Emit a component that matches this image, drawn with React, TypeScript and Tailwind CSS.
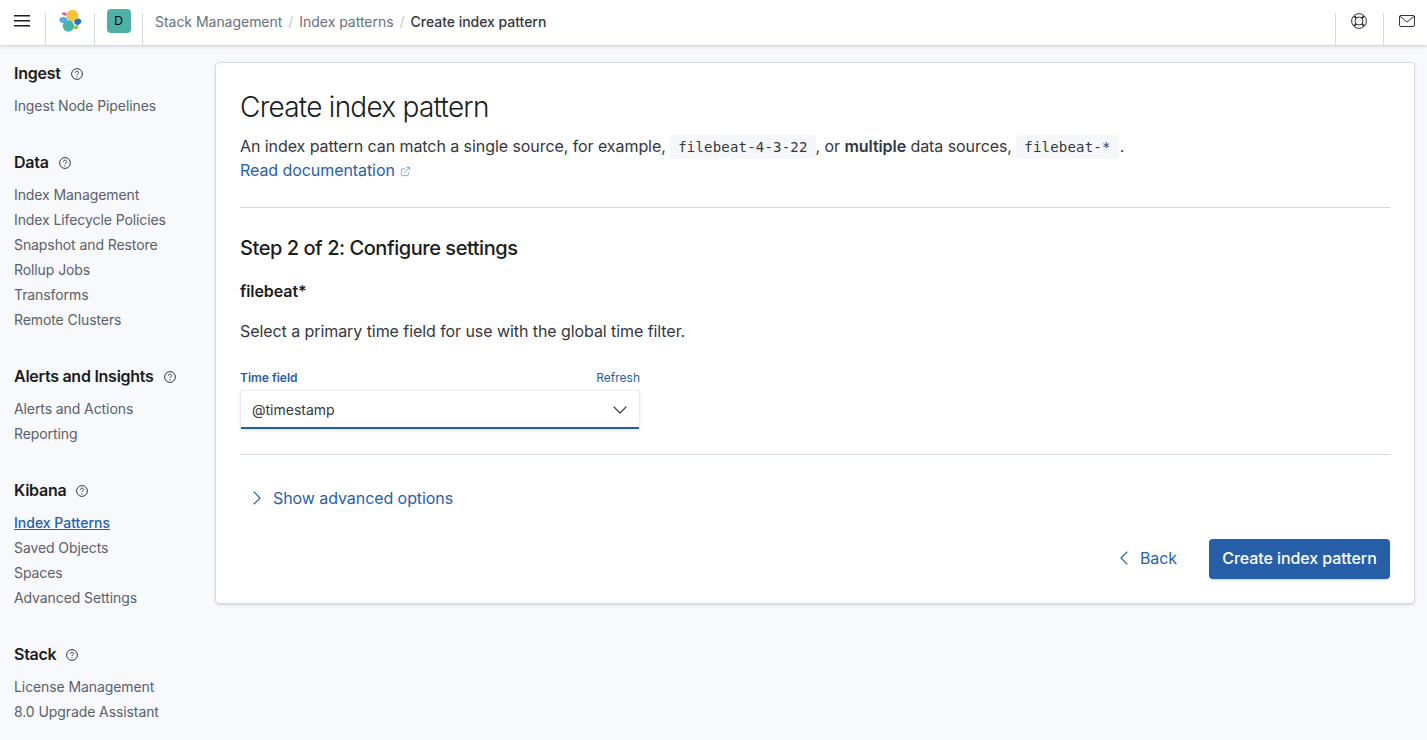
import React from "react";
import { ChevronDown, ChevronLeft, ChevronRight, ExternalLink } from "lucide-react";

const sections = [
    { title: "Ingest", items: ["Ingest Node Pipelines"] },
    {
        title: "Data",
        items: ["Index Management", "Index Lifecycle Policies", "Snapshot and Restore", "Rollup Jobs", "Transforms", "Remote Clusters"],
    },
    { title: "Alerts and Insights", items: ["Alerts and Actions", "Reporting"] },
    { title: "Kibana", items: ["Index Patterns", "Saved Objects", "Spaces", "Advanced Settings"] },
    { title: "Stack", items: ["License Management", "8.0 Upgrade Assistant"] },
];

function HelpIcon() {
    return (
        <svg width="12" height="12" viewBox="0 0 12 12" fill="none" stroke="#343741" className="mt-[1px] shrink-0">
            <circle cx="6" cy="6" r="5.4" strokeWidth="1" />
            <path d="M4.4 4.8c0-1 .7-1.6 1.6-1.6s1.6.6 1.6 1.4c0 1.1-1.6 1.2-1.6 2.4" strokeWidth="1" />
            <circle cx="6" cy="8.7" r=".6" fill="#343741" stroke="none" />
        </svg>
    );
}

function Logo() {
    return (
        <svg width="24" height="24" viewBox="0 0 24 24">
            <ellipse cx="5.4" cy="11" rx="4" ry="3" fill="#5aa8e8" />
            <path d="M4.2 3.4h2.4a2.4 2.4 0 0 1 2.2 3.2H6.4a2.4 2.4 0 0 1-2.2-3.2z" fill="#e0559a" />
            <circle cx="14.5" cy="6.7" r="6" fill="#f6c33c" />
            <circle cx="10.4" cy="17" r="5.7" fill="#4ab3a8" />
            <ellipse cx="19.8" cy="12.7" rx="3.6" ry="3" transform="rotate(-25 19.8 12.7)" fill="#2b6fc0" />
            <path d="M16.5 16.4h4a3.6 3.6 0 0 1-3.6 3.6h-1.4z" fill="#93c040" />
        </svg>
    );
}

function Code({ children }: { children: React.ReactNode }) {
    return (
        <code className="inline-block h-[24px] rounded-[3px] bg-[#f5f7fa] px-[8px] align-baseline font-['DejaVu_Sans_Mono',monospace] text-[14px] leading-[24px] tracking-[0.2px] text-[#343741]">
            {children}
        </code>
    );
}

export default function App() {
    return (
        <div className="flex h-[740px] flex-col overflow-hidden bg-[#f8f9fd] font-['Inter',sans-serif] text-[#343741]">
            <header className="relative z-10 flex h-[45px] shrink-0 items-start bg-white shadow-[0_1px_3px_rgba(52,55,65,0.25)]">
                <div className="mt-[13px] flex h-[32px] w-[46px] items-center justify-center border-r border-[#d3dae6] pb-[16px] pr-[1px]">
                    <svg width="16" height="12" viewBox="0 0 16 12" fill="#1a1c21" className="shrink-0">
                        <rect width="16" height="1.5" y="0" />
                        <rect width="16" height="1.5" y="5" />
                        <rect width="16" height="1.5" y="10" />
                    </svg>
                </div>
                <div className="mt-[13px] flex h-[32px] w-[49px] items-center justify-center border-r border-[#d3dae6] pb-[16px]">
                    <div className="shrink-0">
                        <Logo />
                    </div>
                </div>
                <div className="mt-[13px] flex h-[32px] w-[48px] items-center justify-center border-r border-[#d3dae6] pb-[16px]">
                    <div className="flex h-[24px] w-[24px] shrink-0 items-center justify-center rounded-[4px] bg-[#4fb0a6] text-[12px] text-black">
                        D
                    </div>
                </div>
                <nav className="flex h-[42px] flex-1 items-center gap-[6px] pl-[12px] text-[14px] tracking-[-0.03px] text-[#69707d]">
                    <span>Stack Management</span>
                    <span className="text-[#c2c7d0]">/</span>
                    <span>Index patterns</span>
                    <span className="text-[#c2c7d0]">/</span>
                    <span className="font-medium text-[#343741]">Create index pattern</span>
                </nav>
                <div className="mt-[13px] flex h-[32px] w-[48px] items-center justify-center border-l border-[#d3dae6] pb-[16px] pr-[2px]">
                    <svg width="16" height="16" viewBox="0 0 16 16" fill="none" stroke="#343741" className="shrink-0">
                        <circle cx="8" cy="8" r="7.4" />
                        <circle cx="8" cy="8" r="4" />
                        <path d="M3 3l2.2 2.2M13 3l-2.2 2.2M3 13l2.2-2.2M13 13l-2.2-2.2" strokeWidth="2" />
                    </svg>
                </div>
                <div className="mt-[13px] flex h-[32px] w-[44px] items-center justify-start border-l border-[#d3dae6] pb-[16px] pl-[15px]">
                    <svg width="16" height="12" viewBox="0 0 16 12" fill="none" stroke="#343741" className="shrink-0">
                        <rect x=".5" y=".5" width="15" height="11" rx="1.5" />
                        <path d="M.8 1.2L8 7l7.2-5.8" />
                    </svg>
                </div>
            </header>

            <div className="flex min-h-0 flex-1 items-start">
                <aside className="flex w-[215px] shrink-0 flex-col gap-[32px] pl-[14px] pt-[16px]">
                    {sections.map((section) => (
                        <div key={section.title}>
                            <div className="mb-[8px] flex h-[24px] items-center gap-[10px] text-[16px] font-semibold tracking-[-0.26px] text-[#1a1c21]">
                                {section.title}
                                <HelpIcon />
                            </div>
                            {section.items.map((item) => (
                                <div
                                    key={item}
                                    className={
                                        item === "Index Patterns"
                                            ? "h-[25px] text-[14px] font-medium leading-[25px] text-[#265fa8] underline"
                                            : "h-[25px] text-[14px] leading-[25px] tracking-[-0.09px] text-[#5a606b]"
                                    }
                                >
                                    {item}
                                </div>
                            ))}
                        </div>
                    ))}
                </aside>

                <main className="mt-[17px] h-[542px] w-[1200px] shrink-0 rounded-[4px] border border-[#d3dae6] bg-white px-[24px] pt-[24px] text-[16px] tracking-[-0.07px] shadow-[0_2px_2px_-1px_rgba(152,162,179,0.3),0_1px_5px_-2px_rgba(152,162,179,0.3)]">
                    <h1 className="h-[40px] text-[28px] font-light leading-[40px] tracking-[-0.75px] text-[#1a1c21]">Create index pattern</h1>
                    <p className="mt-[7px] h-[24px] leading-[24px]">
                        An index pattern can match a single source, for example, <Code>filebeat-4-3-22</Code>, or{" "}
                        <strong className="font-semibold">multiple</strong> data sources, <Code>filebeat-*</Code>
                        <span className="ml-[1px]">.</span>
                    </p>
                    <a className="flex h-[24px] items-center gap-[5px] text-[#265fa8]">
                        Read documentation
                        <ExternalLink size={11} strokeWidth={1.5} className="mt-[2px] text-[#5b8ac0]" />
                    </a>
                    <hr className="mt-[25px] border-[#d3dae6]" />
                    <h2 className="mt-[24px] h-[32px] text-[20px] font-medium leading-[32px] tracking-[-0.45px] text-[#1a1c21]">
                        Step 2 of 2: Configure settings
                    </h2>
                    <h3 className="mt-[15px] h-[24px] font-semibold leading-[24px] text-[#1a1c21]">filebeat*</h3>
                    <p className="mt-[16px] h-[24px] leading-[24px]">
                        Select a primary time field for use with the global time filter.
                    </p>
                    <div className="mt-[26px] w-[400px]">
                        <div className="mb-[3px] flex h-[18px] items-center justify-between text-[12px] leading-[18px] tracking-normal text-[#265fa8]">
                            <span className="font-semibold">Time field</span>
                            <span>Refresh</span>
                        </div>
                        <div className="flex h-[39px] items-center justify-between border border-b-0 border-[#e8ebf2] bg-white pb-[1px] pl-[11px] pr-[12px] text-[14px] tracking-normal text-[#343741] shadow-[inset_0_-2px_0_#265fa8,0_2px_4px_-1px_rgba(152,162,179,0.35)]">
                            @timestamp
                            <ChevronDown size={24} strokeWidth={1.1} className="mr-[-5px] text-[#343741]" />
                        </div>
                    </div>
                    <hr className="mt-[25px] border-[#d3dae6]" />
                    <div className="mt-[31px] flex h-[24px] items-center pl-[5px] text-[#265fa8]">
                        <ChevronRight size={24} strokeWidth={1.1} />
                        <span className="ml-[4px]">Show advanced options</span>
                    </div>
                    <div className="mt-[29px] flex items-center justify-end">
                        <div className="mr-[32px] flex items-center pb-[2px] text-[#265fa8]">
                            <ChevronLeft size={24} strokeWidth={1.1} />
                            <span className="ml-[4px]">Back</span>
                        </div>
                        <button className="h-[40px] w-[181px] rounded-[4px] bg-[#265fa8] pb-[2px] font-medium text-white shadow-[0_2px_2px_-1px_rgba(38,95,168,0.3)]">
                            Create index pattern
                        </button>
                    </div>
                </main>
            </div>
        </div>
    );
}
